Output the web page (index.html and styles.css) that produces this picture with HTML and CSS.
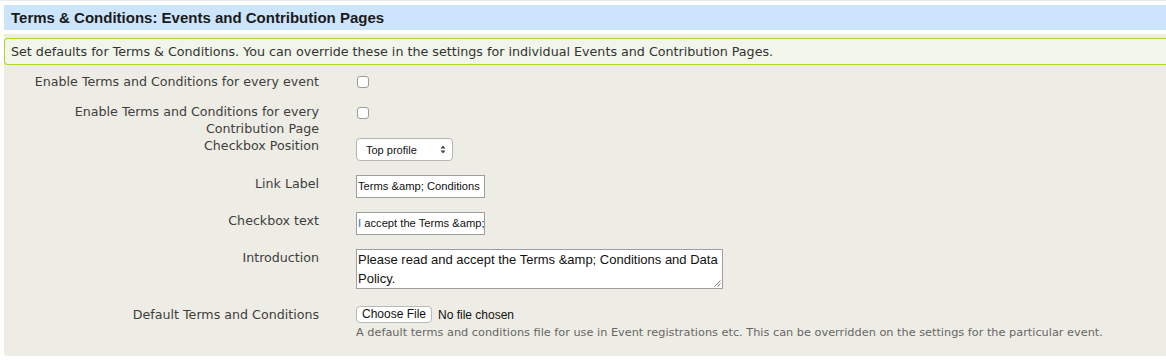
FILE: index.html
```html
<!DOCTYPE html>
<html>
<head>
<meta charset="utf-8">
<link rel="stylesheet" href="styles.css">
</head>
<body>
<div class="page">
  <div class="header">Terms &amp; Conditions: Events and Contribution Pages</div>
  <div class="panel">
    <div class="help">Set defaults for Terms &amp; Conditions. You can override these in the settings for individual Events and Contribution Pages.</div>
    <div class="form">
      <div class="row row-first">
        <div class="label">Enable Terms and Conditions for every event</div>
        <div class="control"><span class="checkbox"></span></div>
      </div>
      <div class="row row-tight">
        <div class="label">Enable Terms and Conditions for every<br>Contribution Page</div>
        <div class="control"><span class="checkbox"></span></div>
      </div>
      <div class="row">
        <div class="label">Checkbox Position</div>
        <div class="control">
          <div class="select"><span>Top profile</span>
            <svg class="arrows" width="6" height="9" viewBox="0 0 6 9"><path d="M3 0.5 L5.5 3.5 H0.5 Z M3 8.5 L5.5 5.5 H0.5 Z" fill="#444"/></svg>
          </div>
        </div>
      </div>
      <div class="row">
        <div class="label">Link Label</div>
        <div class="control"><div class="input">Terms &amp;amp; Conditions</div></div>
      </div>
      <div class="row">
        <div class="label">Checkbox text</div>
        <div class="control"><div class="input"><span class="cursor">I</span> accept the Terms &amp;amp;</div></div>
      </div>
      <div class="row row-area">
        <div class="label">Introduction</div>
        <div class="control">
          <div class="textarea">Please read and accept the Terms &amp;amp; Conditions and Data Policy.
            <svg class="grip" width="7" height="7" viewBox="0 0 7 7"><path d="M6.5 0.5 L0.5 6.5 M6.5 3.5 L3.5 6.5" stroke="#777" stroke-width="1"/></svg>
          </div>
        </div>
      </div>
      <div class="row">
        <div class="label">Default Terms and Conditions</div>
        <div class="control">
          <div class="file"><span class="filebtn">Choose File</span><span class="nofile">No file chosen</span></div>
          <div class="desc">A default terms and conditions file for use in Event registrations etc. This can be overridden on the settings for the particular event.</div>
        </div>
      </div>
    </div>
  </div>
</div>
</body>
</html>
```
FILE: styles.css
```css
html, body {
  margin: 0;
  padding: 0;
  background: #ffffff;
}
body {
  border-top: 1px solid #ecece6;
  width: 1166px;
  height: 360px;
  overflow: hidden;
}
.page {
  padding: 4px 0 0 4px;
}
.header {
  background: #cce4fc;
  height: 25px;
  line-height: 26px;
  padding-left: 7px;
  font-family: "Liberation Sans", Arial, sans-serif;
  font-weight: bold;
  font-size: 15px;
  color: #1a1a1a;
}
.panel {
  margin-top: 4px;
  background: #eeede5;
  border-radius: 0 0 0 4px;
  height: 322px;
  padding-top: 4px;
  box-sizing: border-box;
}
.help {
  border: 1px solid #add62a;
  border-right: none;
  border-radius: 4px 0 0 4px;
  background: #f1f5ea;
  height: 25px;
  line-height: 25px;
  padding-left: 6px;
  font-family: "DejaVu Sans", Verdana, sans-serif;
  font-size: 12.7px;
  color: #333;
}
.form {
  padding-top: 7px;
  font-family: "DejaVu Sans", Verdana, sans-serif;
  font-size: 12.65px;
  color: #3e3e3e;
}
.row {
  display: flex;
  align-items: flex-start;
  margin-bottom: 14px;
}
.row-tight {
  margin-bottom: 0;
}
.row-area {
  margin-bottom: 17px;
}
.label {
  width: 315px;
  text-align: right;
  line-height: 17px;
  flex: none;
}
.row-first .label {
  padding-top: 1px;
  margin-bottom: -1px;
}
.control {
  margin-left: 37px;
}
.checkbox {
  display: block;
  margin-top: 4px;
  margin-left: 1px;
  width: 10px;
  height: 10px;
  border: 1px solid #9a9a9a;
  border-radius: 3px;
  background: #fff;
}
.select {
  display: flex;
  align-items: center;
  justify-content: space-between;
  box-sizing: border-box;
  margin-top: 1px;
  width: 97px;
  height: 23px;
  padding: 0 6px 0 9px;
  border: 1px solid #b5b5b5;
  border-radius: 4px;
  background: #fff;
  font-family: "Liberation Sans", Arial, sans-serif;
  font-size: 11px;
  color: #111;
}
.input {
  box-sizing: border-box;
  width: 129px;
  height: 23px;
  line-height: 21px;
  border: 1px solid #9e9e9e;
  background: #fff;
  padding-left: 1px;
  font-family: "Liberation Sans", Arial, sans-serif;
  font-size: 11.2px;
  color: #111;
  white-space: nowrap;
  overflow: hidden;
}
.cursor {
  color: #2a6db5;
}
.textarea {
  position: relative;
  box-sizing: border-box;
  width: 367px;
  height: 40px;
  border: 1px solid #9e9e9e;
  background: #fff;
  padding: 0 1px;
  line-height: 19px;
  font-family: "Liberation Sans", Arial, sans-serif;
  font-size: 13px;
  color: #111;
}
.grip {
  position: absolute;
  right: 1px;
  bottom: 1px;
}
.file {
  display: flex;
  align-items: center;
  height: 17px;
  font-family: "Liberation Sans", Arial, sans-serif;
  font-size: 12px;
  color: #111;
}
.filebtn {
  box-sizing: border-box;
  width: 76px;
  height: 17px;
  line-height: 15px;
  text-align: center;
  border: 1px solid #b8b8b8;
  border-radius: 4px;
  background: #fff;
}
.nofile {
  margin-left: 6px;
}
.desc {
  margin-top: 1px;
  line-height: 17px;
  font-size: 11.3px;
  color: #666;
}
```
